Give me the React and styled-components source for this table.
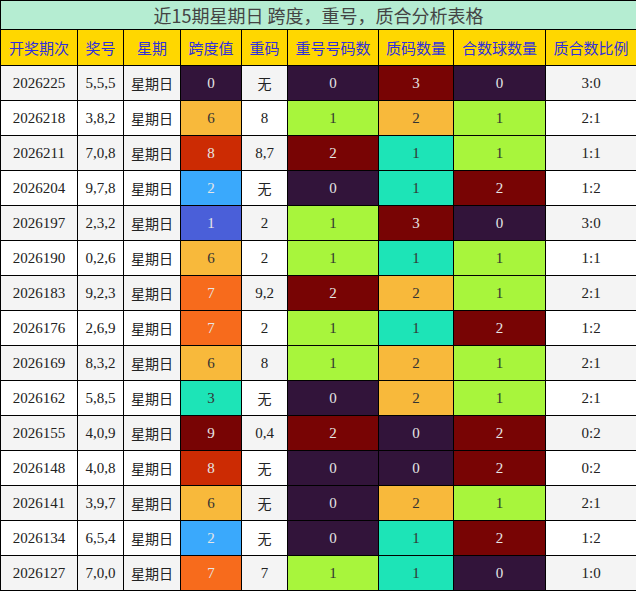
import React from "react";
import styled, { createGlobalStyle } from "styled-components";

const GlobalStyle = createGlobalStyle`
  body {
    margin: 0;
    background: #ffffff;
  }
`;

const C = {
  purple: "#32143a",
  maroon: "#780404",
  gold: "#f8b93b",
  lime: "#a8f53c",
  teal: "#1de4b7",
  red: "#cc2b03",
  sky: "#3aa9fc",
  indigo: "#4a5fd9",
  orange: "#f76b1c",
};

const light = [C.gold, C.lime, C.teal];

const spanColor = { 0: C.purple, 1: C.indigo, 2: C.sky, 3: C.teal, 6: C.gold, 7: C.orange, 8: C.red, 9: C.maroon };
const repColor = { 0: C.purple, 1: C.lime, 2: C.maroon };
const primeColor = { 0: C.purple, 1: C.teal, 2: C.gold, 3: C.maroon };
const compColor = { 0: C.purple, 1: C.lime, 2: C.maroon };

const rows = [
  ["2026225", "5,5,5", 0, "无", 0, 3, 0, "3:0"],
  ["2026218", "3,8,2", 6, "8", 1, 2, 1, "2:1"],
  ["2026211", "7,0,8", 8, "8,7", 2, 1, 1, "1:1"],
  ["2026204", "9,7,8", 2, "无", 0, 1, 2, "1:2"],
  ["2026197", "2,3,2", 1, "2", 1, 3, 0, "3:0"],
  ["2026190", "0,2,6", 6, "2", 1, 1, 1, "1:1"],
  ["2026183", "9,2,3", 7, "9,2", 2, 2, 1, "2:1"],
  ["2026176", "2,6,9", 7, "2", 1, 1, 2, "1:2"],
  ["2026169", "8,3,2", 6, "8", 1, 2, 1, "2:1"],
  ["2026162", "5,8,5", 3, "无", 0, 2, 1, "2:1"],
  ["2026155", "4,0,9", 9, "0,4", 2, 0, 2, "0:2"],
  ["2026148", "4,0,8", 8, "无", 0, 0, 2, "0:2"],
  ["2026141", "3,9,7", 6, "无", 0, 2, 1, "2:1"],
  ["2026134", "6,5,4", 2, "无", 0, 1, 2, "1:2"],
  ["2026127", "7,0,0", 7, "7", 1, 1, 0, "1:0"],
];

const headers = ["开奖期次", "奖号", "星期", "跨度值", "重码", "重号号码数", "质码数量", "合数球数量", "质合数比例"];
const widths = [77, 46, 57, 61, 46, 91, 75, 92, 91];

const Table = styled.table`
  width: 636px;
  border-collapse: collapse;
  table-layout: fixed;
  font-family: "Liberation Serif", "Noto Sans CJK SC", serif;
`;

const TitleCell = styled.th`
  height: 28px;
  padding: 0;
  background: #b5edd2;
  border: 1px solid #000;
  color: #444;
  font-family: "Noto Sans CJK SC", sans-serif;
  font-size: 18px;
  font-weight: normal;
  line-height: 28px;
`;

const HeadCell = styled.th`
  height: 35px;
  padding: 0;
  background: #ffd700;
  border: 1px solid #000;
  color: #3030dc;
  font-family: "Noto Sans CJK SC", sans-serif;
  font-size: 15px;
  font-weight: normal;
`;

const Row = styled.tr`
  background: ${(p) => (p.$odd ? "#f4f4f4" : "#ffffff")};
`;

const Cell = styled.td`
  height: 34px;
  padding: 0;
  border: 1px solid #000;
  text-align: center;
  vertical-align: middle;
  font-size: 15px;
  color: ${(p) => (p.$bg ? (light.includes(p.$bg) ? "#333" : "#e6e6e6") : "#222")};
  background: ${(p) => p.$bg || "transparent"};
`;

const Week = styled.span`
  font-family: "Noto Sans CJK SC", sans-serif;
  font-size: 14px;
  color: #222;
`;

export default function App() {
  return (
    <>
      <GlobalStyle />
      <Table>
        <colgroup>
          {widths.map((w, i) => (
            <col key={i} style={{ width: w }} />
          ))}
        </colgroup>
        <thead>
          <tr>
            <TitleCell colSpan={9}>近15期星期日 跨度，重号，质合分析表格</TitleCell>
          </tr>
          <tr>
            {headers.map((h) => (
              <HeadCell key={h}>{h}</HeadCell>
            ))}
          </tr>
        </thead>
        <tbody>
          {rows.map((r, i) => (
            <Row key={r[0]} $odd={i % 2 === 0}>
              <Cell>{r[0]}</Cell>
              <Cell>{r[1]}</Cell>
              <Cell>
                <Week>星期日</Week>
              </Cell>
              <Cell $bg={spanColor[r[2]]}>{r[2]}</Cell>
              <Cell>{r[3] === "无" ? <Week>无</Week> : r[3]}</Cell>
              <Cell $bg={repColor[r[4]]}>{r[4]}</Cell>
              <Cell $bg={primeColor[r[5]]}>{r[5]}</Cell>
              <Cell $bg={compColor[r[6]]}>{r[6]}</Cell>
              <Cell>{r[7]}</Cell>
            </Row>
          ))}
        </tbody>
      </Table>
    </>
  );
}
